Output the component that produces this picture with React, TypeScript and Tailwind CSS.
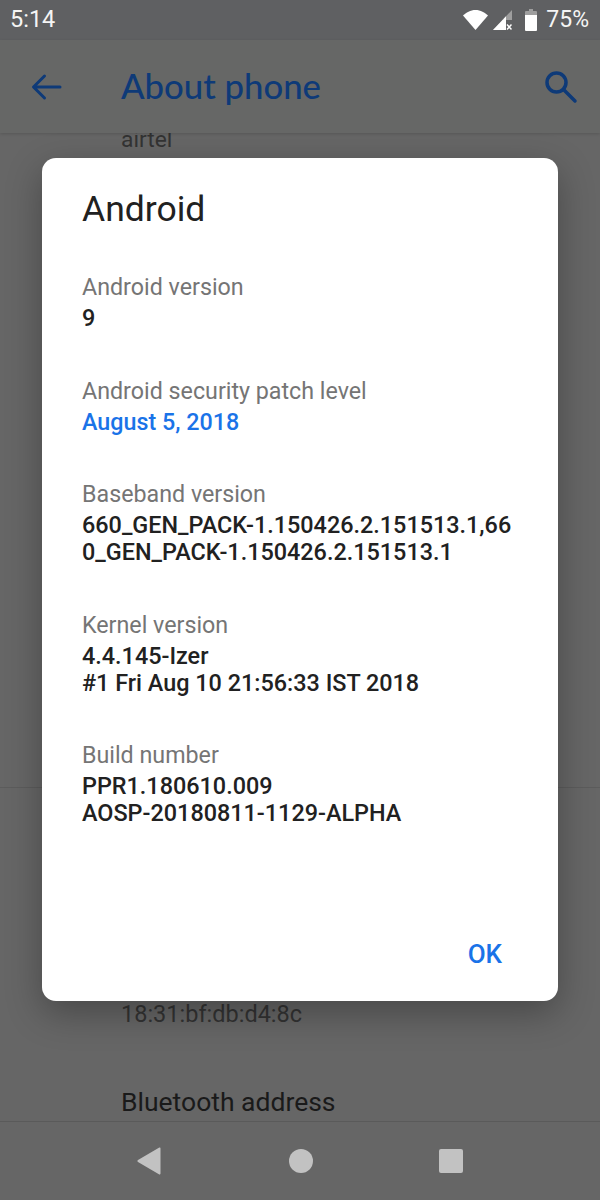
import React from "react";

function InfoBlock({ label, lines, accent }: { label: string; lines: string[]; accent?: boolean }) {
  return (
    <div className="mb-[42.500px]">
      <div className="text-[23.250px] leading-[32px] text-[#757575]">{label}</div>
      <div className="mt-[2px]">
        {lines.map((line) => (
          <div
            key={line}
            className={
              accent
                ? "text-[23.300px] leading-[27px] font-medium text-[#1a73e8]"
                : "text-[23.400px] leading-[27px] font-medium text-[#212121]"
            }
          >
            {line}
          </div>
        ))}
      </div>
    </div>
  );
}

function StatusIcons() {
  return (
    <div className="flex items-center">
      <svg width="25" height="20" viewBox="0 0 25 20" className="mr-[5px]">
        <path d="M0 5.500C3 2.500 7.500 0 12.500 0s9.500 2.500 12.500 5.500L12.500 20z" fill="#fff" />
      </svg>
      <svg width="19" height="20" viewBox="0 0 19 20" className="mr-[13px]">
        <path d="M0 20L19 0v10h-6v10z" fill="#9e9e9e" />
        <path d="M0 20L10 9.500V20z" fill="#fff" />
        <path d="M10 9.500L13 6.300V20h-3z" fill="#fff" />
        <path d="M14 14.500l4.500 5M18.500 14.500l-4.500 5" stroke="#fff" strokeWidth="1.500" />
      </svg>
      <svg width="12" height="22" viewBox="0 0 12 22" className="mr-[9px]">
        <path d="M4 0h4v2H4z" fill="#9e9e9e" />
        <path d="M1 2h10a1 1 0 0 1 1 1v3H0V3a1 1 0 0 1 1-1z" fill="#9e9e9e" />
        <path d="M0 6h12v15a1 1 0 0 1-1 1H1a1 1 0 0 1-1-1z" fill="#fff" />
      </svg>
      <span className="text-[23px] text-[#f5f5f5]">75%</span>
    </div>
  );
}

export default function App() {
  return (
    <div
      className="relative w-[600px] h-[1200px] overflow-hidden bg-[#666666] flex flex-col"
      style={{ fontFamily: "Roboto, sans-serif" }}
    >
      <div className="h-[40px] bg-[#5f6062] flex items-center justify-between pl-[10px] pr-[11px] text-white">
        <span className="text-[23.500px] text-[#f5f5f5]">5:14</span>
        <StatusIcons />
      </div>
      <div className="relative z-10 h-[93px] bg-[#666766] shadow-[0_1px_3px_rgba(0,0,0,0.15)] flex items-center pl-[30px] pr-[22px]">
        <svg width="32" height="32" viewBox="0 0 32 32" fill="none" stroke="#0e3a78" strokeWidth="3" strokeLinecap="round" strokeLinejoin="round">
          <path d="M30 16H4M14.500 5L3.500 16l11 11" />
        </svg>
        <span className="ml-[59px] text-[34.700px] font-medium text-[#0e3a78]" style={{ fontFamily: "Lato, sans-serif" }}>
          About phone
        </span>
        <svg width="34" height="34" viewBox="0 0 34 34" fill="none" stroke="#0e3a78" strokeWidth="3.500" strokeLinecap="round" className="ml-auto">
          <circle cx="12.500" cy="12.500" r="9.500" />
          <path d="M20 20l11 11" />
        </svg>
      </div>
      <div className="flex-1 flex flex-col overflow-hidden">
        <div className="pl-[121px] mt-[-7px] text-[22.800px] leading-[28px] text-[#333333]">airtel</div>
        <div className="mt-[633px] h-[1px] bg-[#5c5c5c]" />
        <div className="pl-[121px] mt-[212px] text-[23.500px] leading-[28px] text-[#333333]">18:31:bf:db:d4:8c</div>
        <div className="pl-[121px] mt-[58px] text-[26.500px] leading-[32px] text-[#1a1a1a]">Bluetooth address</div>
      </div>
      <div className="h-[79px] border-t border-[#5a5a5a] bg-[#666666] flex items-center justify-center pb-[1px]">
        <svg width="24" height="28" viewBox="0 0 24 28" className="mr-[128px]">
          <path d="M23.500 1.500v25a1 1 0 0 1-1.600.8L1 15a1.300 1.300 0 0 1 0-2L21.900.700a1 1 0 0 1 1.600.8z" fill="#c2c2c2" />
        </svg>
        <div className="w-[24px] h-[24px] rounded-full bg-[#c2c2c2] mr-[126px]" />
        <div className="w-[24px] h-[24px] rounded-[2px] bg-[#c2c2c2]" />
      </div>

      <div className="absolute left-[42px] top-[158px] w-[516px] h-[843px] bg-white rounded-[14px] shadow-[0_12px_36px_rgba(0,0,0,0.3)] pl-[40px] pr-[40px] pt-[29px]">
        <div className="text-[35.500px] leading-[44px] text-[#212121] mb-[40px]">Android</div>
        <InfoBlock label="Android version" lines={["9"]} />
        <InfoBlock label="Android security patch level" lines={["August 5, 2018"]} accent />
        <InfoBlock label="Baseband version" lines={["660_GEN_PACK-1.150426.2.151513.1,66", "0_GEN_PACK-1.150426.2.151513.1"]} />
        <InfoBlock label="Kernel version" lines={["4.4.145-Izer", "#1 Fri Aug 10 21:56:33 IST 2018"]} />
        <InfoBlock label="Build number" lines={["PPR1.180610.009", "AOSP-20180811-1129-ALPHA"]} />
        <div className="absolute right-[56px] bottom-[31px] text-[26px] leading-[32px] font-medium text-[#1a73e8]">OK</div>
      </div>
    </div>
  );
}
